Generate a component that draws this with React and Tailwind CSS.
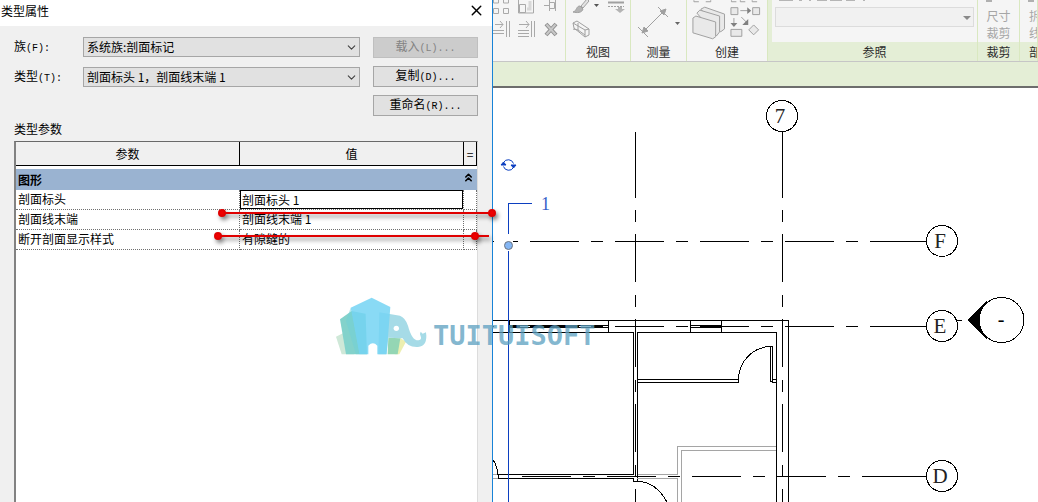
import { useState } from 'react';
import { ChevronDown, ChevronsUp, X } from 'lucide-react';

const PARAMETERS = [
  { name: '剖面标头', value: '剖面标头 1', editing: true },
  { name: '剖面线末端', value: '剖面线末端 1' },
  { name: '断开剖面显示样式', value: '有隙缝的' },
];

const GRID_BUBBLES = [
  { label: '7', x: 782, y: 116 },
  { label: 'F', x: 942, y: 241 },
  { label: 'E', x: 942, y: 326 },
  { label: 'D', x: 942, y: 476 },
];

// Chinese caption followed by a narrow mono mnemonic, e.g. 族(F):
const Caption = ({ text, mnemonic }) => (
  <>
    {text}
    <span className="font-['Liberation_Mono',monospace] text-[10px]">{mnemonic}</span>
  </>
);

const SelectField = ({ id, label, mnemonic, options }) => (
  <div className="flex h-5 items-center">
    <label htmlFor={id} className="w-[69px] shrink-0">
      <Caption text={label} mnemonic={mnemonic} />
    </label>
    <div className="relative min-w-0 flex-1">
      <select
        id={id}
        className="block h-5 w-full appearance-none border border-[#a6a6a6] bg-[#e1e1e1] pl-[3px] text-xs leading-4 outline-none"
      >
        {options.map((option) => (
          <option key={option}>{option}</option>
        ))}
      </select>
      <ChevronDown
        className="pointer-events-none absolute top-1 right-[2px] text-[#404040]"
        size={13}
        strokeWidth={2}
      />
    </div>
  </div>
);

const DialogButton = ({ text, mnemonic, disabled }) => (
  <button
    type="button"
    disabled={disabled}
    className="h-[21px] border border-[#a6a6a6] bg-[#e1e1e1] leading-4 disabled:border-[#bfbfbf] disabled:bg-[#cccccc] disabled:text-[#838383]"
  >
    <Caption text={text} mnemonic={mnemonic} />
  </button>
);

const ParameterTable = () => {
  const [expanded, setExpanded] = useState(true);

  return (
    <table className="w-full table-fixed border-separate border-spacing-0 leading-4">
      <colgroup>
        <col className="w-[224px]" />
        <col />
        <col className="w-[13px]" />
      </colgroup>
      <thead>
        <tr className="h-6 bg-[#f0f0f0]">
          <th className="border-r border-b border-black p-0 font-normal">参数</th>
          <th className="border-r border-b border-black p-0 font-normal">值</th>
          <th className="border-r border-b border-black p-0 font-normal">=</th>
        </tr>
      </thead>
      <tbody>
        <tr className="h-[3px]">
          <td colSpan={3} className="h-[3px] p-0"></td>
        </tr>
        <tr className="h-[21px] bg-[#9ab3d1]">
          <th colSpan={3} className="p-0 text-left">
            <div className="flex h-[21px] items-center justify-between pl-[2px]">
              <span>图形</span>
              <button type="button" aria-label="折叠" onClick={() => setExpanded(!expanded)}>
                <ChevronsUp size={13} strokeWidth={3} className="mr-[2px] mb-1" />
              </button>
            </div>
          </th>
        </tr>
        {expanded &&
          PARAMETERS.map(({ name, value, editing }) => (
            <tr key={name} className="h-5">
              <td className="border-r border-b border-dotted border-[#707070] p-0 pb-[1px] pl-[2px]">{name}</td>
              <td className="border-r border-b border-dotted border-[#707070] p-0">
                {editing ? (
                  <input
                    aria-label={name}
                    defaultValue={value}
                    className="block h-[19px] w-full border border-black bg-white pb-[1px] pl-[1px] outline-none"
                  />
                ) : (
                  <span className="block pb-[1px] pl-[2px]">{value}</span>
                )}
              </td>
              <td className="border-r border-b border-dotted border-[#707070] p-0"></td>
            </tr>
          ))}
      </tbody>
    </table>
  );
};

const TypePropertiesDialog = () => (
  <section className="flex min-w-0 flex-col border-r border-[#1883d7] bg-[#f0f0f0]">
    <header className="flex h-[26px] items-center justify-between bg-white pr-[7px] pl-[1px]">
      <h1 className="-mt-1">类型属性</h1>
      <button type="button" aria-label="关闭" className="-mt-[6px]">
        <X size={17} strokeWidth={2} />
      </button>
    </header>

    <div className="flex gap-[13px] pt-[11px] pr-[14px] pl-[14px]">
      <div className="flex min-w-0 flex-1 flex-col gap-[10px]">
        <SelectField id="family" label="族" mnemonic="(F):" options={['系统族:剖面标记']} />
        <SelectField id="type" label="类型" mnemonic="(T):" options={['剖面标头 1，剖面线末端 1']} />
      </div>
      <div className="flex w-[105px] flex-col gap-2">
        <DialogButton text="载入" mnemonic="(L)..." disabled />
        <DialogButton text="复制" mnemonic="(D)..." />
        <DialogButton text="重命名" mnemonic="(R)..." />
      </div>
    </div>

    <h2 className="flex h-[25px] items-center pl-[14px]">类型参数</h2>

    <div className="mr-[14px] ml-[14px] flex-1 border-t border-r border-l-2 border-t-[#696969] border-r-[#dcdcdc] border-l-[#828282] bg-white">
      <ParameterTable />
    </div>
  </section>
);

const RibbonPanel = ({ title, children, contextual, alignLeft }) => (
  <div className="flex min-w-0 flex-col overflow-hidden border-r border-[#d9e8c0]">
    <div className="h-[42px]">{children}</div>
    <h3
      className={`flex h-[19px] items-center whitespace-nowrap text-[#2b2b2b] ${
        contextual ? 'bg-[#e4eed6]' : ''
      } ${alignLeft ? 'pl-[9px]' : 'justify-center'}`}
    >
      {title}
    </h3>
  </div>
);

const ModifyIcons = () => (
  <svg viewBox="493 0 72 42" className="h-[42px] w-full" fill="none" stroke="#a9a9a9">
    <path d="M493.5 -2v5h5v-5M503.5 -2v5h5v-5M493.5 8.500h5v5h-5zM503.500 8.500h5v5h-5z" />
    <path d="M518.500 -1v14h15v-14M519.500 4.500h6v8h-6z" />
    <path d="M530 1v8h-3" strokeWidth="3" stroke="#d8d8d8" />
    <path d="M544 5.500h5M549.500 0v11M549.500 2.500h5v6h-5M555.500 0v11" />
    <path d="M495 24.500h8M500 21l3 3.500-3 3.500M493 30.500h11M493 33.500h11M506.500 21v16M509.500 21v16" />
    <path d="M519 24.500h10M526 21l3 3.500-3 3.500M518 30.500h11M518 33.500h11M518 36.500h11M531.500 21v16M534.500 21v16" />
    <path d="m546 24 10 11M556 24l-10 11" stroke="#8e8e8e" strokeWidth="4" />
    <path d="m546.500 24.500 9 10M555.500 24.500l-9 10" stroke="#c8c8c8" strokeWidth="2" />
  </svg>
);

const ViewIcons = () => (
  <svg viewBox="566 0 64 42" className="h-[42px] w-full" fill="none" stroke="#a0a0a0">
    <path d="M573 12c4-1 3-6 7-6l3 3c-1 4-6 4-10 3z" fill="#b4b4b4" />
    <path d="m581 6 6-7 2 2-6 7z" fill="#e2e2e2" />
    <path d="M594 4h5l-2.500 3z" fill="#555" stroke="none" />
    <path d="M608 2.500h16" strokeWidth="2" />
    <path d="M608 6.500h16" strokeDasharray="2 1" />
    <path d="M618 7h4v2h3l-5 4-5-4h3z" fill="#b4b4b4" stroke="none" />
    <path d="m573 23 4-2 12 8v6l-4 2-11-9zM573 23l12 7 4-1M585 30v7M578 23v7l7 5M578 30l-5-1" />
  </svg>
);

const MeasureIcons = () => (
  <svg viewBox="631 0 55 42" className="h-[42px] w-full" fill="none" stroke="#a0a0a0">
    <path d="m643 32 22-22M638 27l10 10M658 7l10 10" />
    <path d="m642 33 2-6 4 4zM666 9l-6 2 4 4z" fill="#a0a0a0" />
    <path d="M675 22h5l-2.500 3z" fill="#666" stroke="none" />
  </svg>
);

const CreateIcons = () => (
  <svg viewBox="687 0 81 42" className="h-[42px] w-full" fill="#e9e9e9" stroke="#a0a0a0">
    <path d="M694 0v1.500h5M711 0v1.500h-5M732 0v1.500h5M741 0v1.500h5M753 0v1.500h5" fill="none" />
    <path d="m701 9 4-2 20 7v15l-4 3z" />
    <path d="m697 13 3-3 20 6v16l-3 4z" />
    <path d="m693 18 3-2 20 6v15l-3 2-20-6z" />
    <path d="M731.500 7.500h7v7h-7zM753.500 7.500h7v7h-7zM731.500 29.500h11v7h-11zM754.500 25l5 5-5 5-5-5z" />
    <path d="M741 10.500h9M734.500 18v8M742 17l6 6" fill="none" />
    <path d="m748 7 4 3.500-4 3.500zM731 23l3.500 4 3.500-4zM749 19v6h-6z" fill="#808080" stroke="none" />
  </svg>
);

const Ribbon = () => (
  <header>
    <div className="grid h-[61px] grid-cols-[73fr_65fr_56fr_81fr_4fr_206fr_42fr_18fr] bg-[#f5f5f5]">
      <RibbonPanel>
        <ModifyIcons />
      </RibbonPanel>
      <RibbonPanel title="视图">
        <ViewIcons />
      </RibbonPanel>
      <RibbonPanel title="测量">
        <MeasureIcons />
      </RibbonPanel>
      <RibbonPanel title="创建">
        <CreateIcons />
      </RibbonPanel>
      <div className="bg-[#e4eed6]"></div>
      <RibbonPanel title="参照" contextual>
        <div className="relative px-[3px] pt-[7px]">
          <svg viewBox="0 0 200 2" className="absolute top-0 left-[3px] h-[2px] w-[200px]" stroke="#b5b5b5">
            <path d="M4 .5h14M24 .5h3M34 .5h2M42 .5h10M55 .5h12M71 .5h9M88 .5h2" />
          </svg>
          <select
            aria-label="参照"
            disabled
            className="block h-5 w-full appearance-none border border-[#dcdcdc] bg-[#f1f1f1]"
          ></select>
          <svg viewBox="0 0 8 4" className="pointer-events-none absolute top-4 right-[6px] h-1 w-2">
            <path d="M0 0h8l-4 4z" fill="#8a8a8a" />
          </svg>
        </div>
      </RibbonPanel>
      <RibbonPanel title="裁剪" contextual>
        <button type="button" disabled className="relative block w-full pt-[7px] text-center leading-[17px] text-[#a6a6a6]">
          <span className="absolute top-0 left-2 h-[2px] w-[6px] bg-[#b0b0b0]"></span>
          尺寸
          <br />
          裁剪
        </button>
      </RibbonPanel>
      <RibbonPanel title="部" contextual alignLeft>
        <button
          type="button"
          disabled
          className="relative block pt-[7px] pl-[9px] leading-[17px] whitespace-nowrap text-[#a6a6a6]"
        >
          <span className="absolute top-0 left-2 h-[2px] w-[6px] bg-[#b0b0b0]"></span>
          拆
          <br />
          线
        </button>
      </RibbonPanel>
    </div>
    <div className="h-[27px] border-t border-b-2 border-t-[#c6c6c6] border-b-[#6d6d6d] bg-[#e4eed6]"></div>
  </header>
);

const FloorPlan = () => (
  <svg viewBox="493 88 545 414" className="block w-full" fill="none" stroke="#000" shapeRendering="crispEdges">
    {/* Grid lines */}
    <path d="M635.500 132v66M635.500 210v12M782.500 131v67M782.500 210v12" />
    <path d="M635.500 234v268M782.500 234v268" strokeDasharray="48 13 12 12" />
    <path d="M493 241.500h1M513 241.500h5M493 326.500h1" />
    <path d="M530 241.500h335M530 326.500h335" strokeDasharray="49 12 12 12" />
    <path d="M522 476.500h335" strokeDasharray="49 12 12 12" />
    <path d="M870 241.500h56M870 326.500h56M862 476.500h64" />

    {/* Outer walls */}
    <path d="M493 320.500h295M788.500 320v182M493 332.500h140M638 332.500h139M776.500 332v170" />

    {/* Windows */}
    <path d="M509.500 320v12M608.500 320v12M509 325.500h99M509 327.500h99M690.500 320v12M721.500 320v12M690 325.500h31M690 327.500h31" />
    <path d="M509 326.500h11M530 326.500h49M591 326.500h12M700 326.500h21" strokeWidth="3" />

    {/* Interior walls */}
    <path d="M633.500 332v142M637.500 332v149M637 379.500h101M637 382.500h102M738.500 379v4M772 379.500h4M772 382.500h4" />
    <path d="M498 474.500h136M498 478.500h136M498.500 474v5M633.500 478v3h4" />
    <path
      d="M776 446.500h-98.500v28h-40M493 474.500h5M493 478.500h5M637 478.500h40.500V502M776 450.500h-94.500V502"
      stroke="#a5a5a5"
    />

    {/* Doors */}
    <path d="M770.500 346.500h2v35h-2zM738.500 379.500A33 33 0 0 1 770 346.500" />
    <path d="M493 460q4 5 5 15M637.500 481.500q18 0 29.500 20.500" />

    {/* Section line with its head and grips */}
    <g stroke="#0c3fc0">
      <path d="M508.500 234v-30.500h23M508.500 251v251" />
      <g shapeRendering="auto">
        <path d="M503.500 162.500a5.500 5.500 0 0 1 10 1M513.500 167.500a5.500 5.500 0 0 1-10-1" />
        <path d="m501 165 2.500-3 2.500 3zM511 165l2.500 3 2.500-3z" fill="#0c3fc0" />
      </g>
    </g>
    <circle cx="508.500" cy="245.500" r="4" fill="#84b6f4" stroke="#6d7480" shapeRendering="auto" />
    <text
      x="545.500"
      y="210"
      textAnchor="middle"
      fill="#3560c8"
      stroke="none"
      className="font-['Liberation_Serif',serif] text-[18px]"
    >
      1
    </text>

    {/* Grid bubbles */}
    {GRID_BUBBLES.map(({ label, x, y }) => (
      <g key={label}>
        <circle cx={x} cy={y} r="15.500" fill="#fff" />
        <text
          x={x - 2}
          y={y + 7}
          textAnchor="middle"
          fill="#222"
          stroke="none"
          className="font-['Liberation_Serif',serif] text-[21px]"
        >
          {label}
        </text>
      </g>
    ))}

    {/* Elevation mark */}
    <path d="M956 320.500h6" />
    <path d="m968 320 18-18v36z" fill="#000" />
    <circle cx="1001.500" cy="320" r="22.500" fill="#fff" />
    <text
      x="1001"
      y="326"
      textAnchor="middle"
      fill="#000"
      stroke="none"
      className="font-['Liberation_Serif',serif] text-[20px]"
    >
      -
    </text>
  </svg>
);

const Watermark = () => (
  <g>
    <g transform="translate(320 285) scale(.3333)">
      <path d="m48 155 40-20 14 73H65z" fill="#cfe8d8" />
      <path d="m240 158 18 12-20 38h-14z" fill="#ecefb0" />
      <path d="m205 158 36 2-8 48h-30z" fill="#94d6b4" />
      <path
        d="M178 82l62 10q16 6 24 30 12 46 32 44 10-2 6-12-4-8 0-14l6 6 10-4q6 42-24 44-32 2-46-26l-43-2-6 50h-24z"
        fill="#a6dbe7"
      />
      <path d="m60 103 35-25 42 8 4 122H78z" fill="#83d2cb" />
      <path d="m92 68 63-30 56 28-11 142h-28v-26q-13-14-27 0v26h-27z" fill="#74d3f3" fillOpacity=".85" />
      <path d="m92 68-14 40 30 100h10z" fill="#6fcfd8" fillOpacity=".5" />
      <circle cx="229" cy="130" r="8" fill="#fff" />
    </g>
    <text
      x="433"
      y="345"
      fill="#5c9fc0"
      fillOpacity=".75"
      className="font-['DejaVu_Sans_Mono',monospace] text-[27px] font-bold"
    >
      TUITUISOFT
    </text>
  </g>
);

const Annotations = () => (
  <svg viewBox="0 0 1038 502" className="pointer-events-none absolute inset-x-0 top-0 w-full">
    <Watermark />
    <g className="drop-shadow-[2px_3px_2px_rgba(0,0,0,0.5)]" stroke="#e00000" strokeWidth="2" fill="#f00000">
      <path d="M222 213h270M218 236h271" />
      <circle cx="222" cy="213" r="3" />
      <circle cx="492" cy="213" r="3" />
      <circle cx="218" cy="236" r="3" />
      <circle cx="475" cy="236" r="3" />
    </g>
  </svg>
);

const App = () => (
  <div className="relative grid min-h-screen grid-cols-[493fr_545fr] overflow-hidden bg-white font-['Noto_Sans_CJK_SC',sans-serif] text-xs text-black">
    <TypePropertiesDialog />
    <main className="min-w-0">
      <Ribbon />
      <FloorPlan />
    </main>
    <Annotations />
  </div>
);

export default App;
